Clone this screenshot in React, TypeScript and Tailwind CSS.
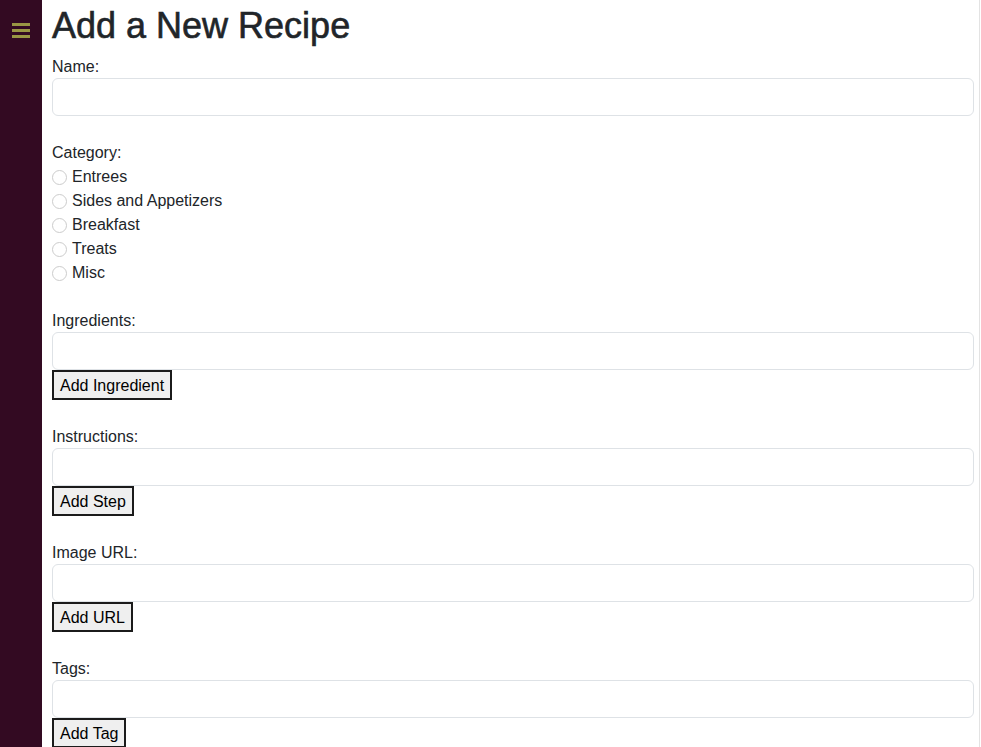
const categories = ["Entrees", "Sides and Appetizers", "Breakfast", "Treats", "Misc"];

const listFields = [
  { label: "Ingredients:", button: "Add Ingredient" },
  { label: "Instructions:", button: "Add Step" },
  { label: "Image URL:", button: "Add URL" },
  { label: "Tags:", button: "Add Tag" },
];

function TextInput() {
  return (
    <input
      type="text"
      className="block h-[38px] w-full rounded-[6px] border border-[#dee2e6] bg-white px-3 outline-none"
    />
  );
}

export default function App() {
  return (
    <div
      className="flex h-screen overflow-hidden bg-white text-[16px] leading-6 text-[#212529]"
      style={{ fontFamily: '"Liberation Sans", Arial, sans-serif' }}
    >
      <aside className="w-[42px] shrink-0 bg-[#330a22]">
        <button type="button" className="ml-[12px] mt-[23px] flex flex-col gap-[3px]" aria-label="Menu">
          <span className="block h-[3px] w-[18px] bg-[#9a9644]" />
          <span className="block h-[3px] w-[18px] bg-[#9a9644]" />
          <span className="block h-[3px] w-[18px] bg-[#9a9644]" />
        </button>
      </aside>

      <main className="min-w-0 flex-1 pl-[10px] pr-[5px]">
        <h1 className="mb-[4px] pt-[2px] text-[36px] font-medium leading-[48px] [-webkit-text-stroke:0.6px_#212529]">
          Add a New Recipe
        </h1>

        <form className="flex flex-col gap-6" onSubmit={(e) => e.preventDefault()}>
          <div>
            <label className="block h-6 pt-[2px] leading-[22px]">Name:</label>
            <TextInput />
          </div>

          <fieldset>
            <div className="h-6 pt-[2px] leading-[22px]">Category:</div>
            {categories.map((c) => (
              <label key={c} className="flex h-6 items-center pt-[2px] leading-[22px]">
                <input
                  type="radio"
                  name="category"
                  className="m-0 mr-[5px] h-[15px] w-[15px] appearance-none rounded-full border border-[#cccccc] bg-white"
                />
                {c}
              </label>
            ))}
          </fieldset>

          {listFields.map((f) => (
            <div key={f.label}>
              <label className="block h-6 pt-[2px] leading-[22px]">{f.label}</label>
              <TextInput />
              <button
                type="button"
                className="h-[30px] border-2 border-[#1b1b1b] bg-[#efefef] px-[6px] pt-[2px] leading-[22px] text-black"
              >
                {f.button}
              </button>
            </div>
          ))}
        </form>
      </main>

      <div className="w-[2px] shrink-0 border-l border-[#e3e3e3] bg-white" />
    </div>
  );
}
